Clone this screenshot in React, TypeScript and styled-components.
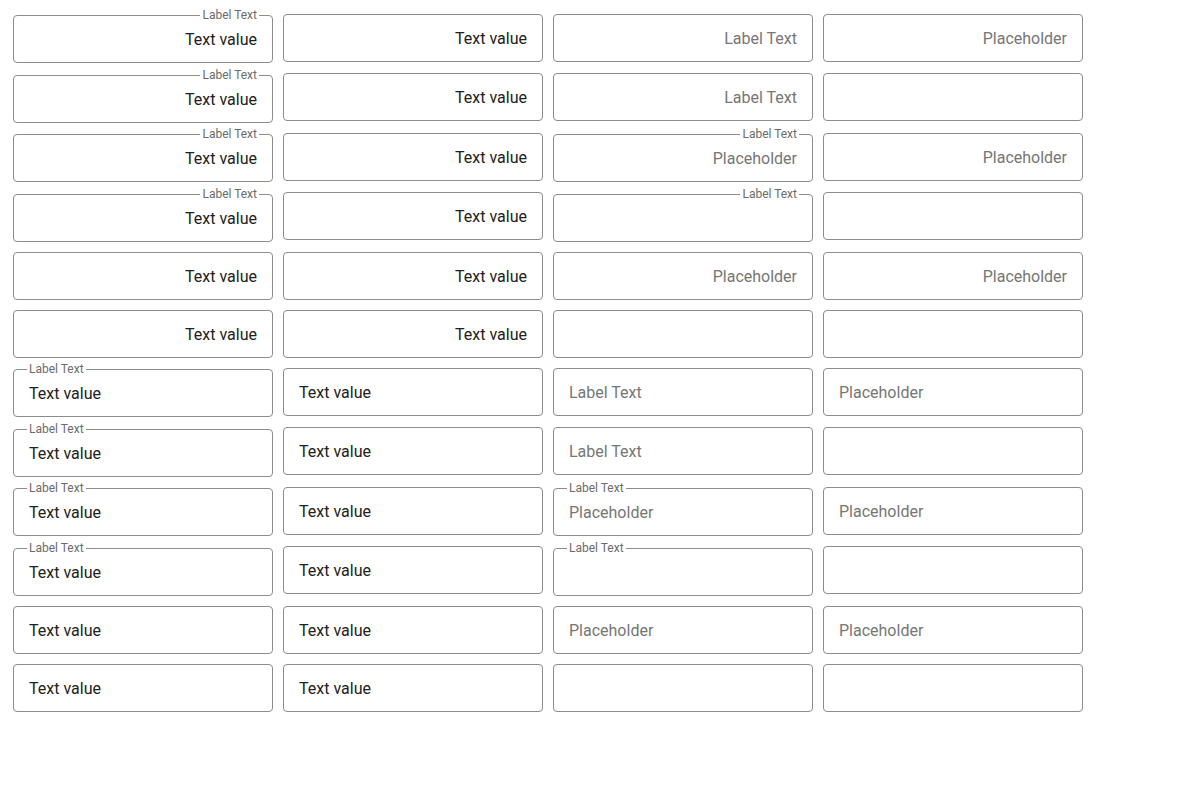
import React from "react";
import styled, { createGlobalStyle } from "styled-components";

const Global = createGlobalStyle`
  body {
    margin: 8px;
    background: #ffffff;
    font-family: Roboto, "Noto Sans", "Liberation Sans", sans-serif;
  }
`;

const Grid = styled.div`
  display: grid;
  grid-template-columns: repeat(4, 260px);
  column-gap: 10px;
  row-gap: 10px;
  padding: 5.5px 5px 6px;
  align-items: start;
`;

const Cell = styled.div<{ $labelled: boolean }>`
  padding-top: ${(p) => (p.$labelled ? "1.5px" : "0")};
`;

const Box = styled.div<{ $align: "left" | "right" }>`
  position: relative;
  box-sizing: border-box;
  height: 48px;
  border: 1px solid #8c8c8c;
  border-radius: 4px;
  padding: 2px 15px 0;
  display: flex;
  align-items: center;
  justify-content: ${(p) => (p.$align === "right" ? "flex-end" : "flex-start")};
`;

const Label = styled.span<{ $align: "left" | "right" }>`
  position: absolute;
  top: -7px;
  ${(p) => (p.$align === "right" ? "right: 13px;" : "left: 13px;")}
  padding: 0 2px;
  background: #ffffff;
  font-size: 12px;
  line-height: 12px;
  color: #6b6b6b;
  white-space: nowrap;
`;

const Value = styled.span<{ $muted: boolean }>`
  font-size: 16px;
  line-height: 20px;
  color: ${(p) => (p.$muted ? "#767676" : "#212121")};
  white-space: nowrap;
`;

type FieldDef = {
  label?: string;
  text?: string;
  muted?: boolean;
};

const col1: FieldDef[] = [
  { label: "Label Text", text: "Text value" },
  { label: "Label Text", text: "Text value" },
  { label: "Label Text", text: "Text value" },
  { label: "Label Text", text: "Text value" },
  { text: "Text value" },
  { text: "Text value" },
];
const col2: FieldDef[] = Array.from({ length: 6 }, () => ({ text: "Text value" }));
const col3: FieldDef[] = [
  { text: "Label Text", muted: true },
  { text: "Label Text", muted: true },
  { label: "Label Text", text: "Placeholder", muted: true },
  { label: "Label Text" },
  { text: "Placeholder", muted: true },
  {},
];
const col4: FieldDef[] = [
  { text: "Placeholder", muted: true },
  {},
  { text: "Placeholder", muted: true },
  {},
  { text: "Placeholder", muted: true },
  {},
];

const Field: React.FC<{ def: FieldDef; align: "left" | "right" }> = ({ def, align }) => (
  <Cell $labelled={!!def.label}>
    <Box $align={align}>
      {def.label && <Label $align={align}>{def.label}</Label>}
      {def.text && <Value $muted={!!def.muted}>{def.text}</Value>}
    </Box>
  </Cell>
);

export default function App() {
  const rows: { defs: FieldDef[]; align: "left" | "right" }[] = [];
  (["right", "left"] as const).forEach((align) => {
    for (let i = 0; i < 6; i++) {
      rows.push({ defs: [col1[i], col2[i], col3[i], col4[i]], align });
    }
  });
  return (
    <>
      <Global />
      <Grid>
        {rows.map((r, ri) =>
          r.defs.map((d, ci) => <Field key={`${ri}-${ci}`} def={d} align={r.align} />)
        )}
      </Grid>
    </>
  );
}
